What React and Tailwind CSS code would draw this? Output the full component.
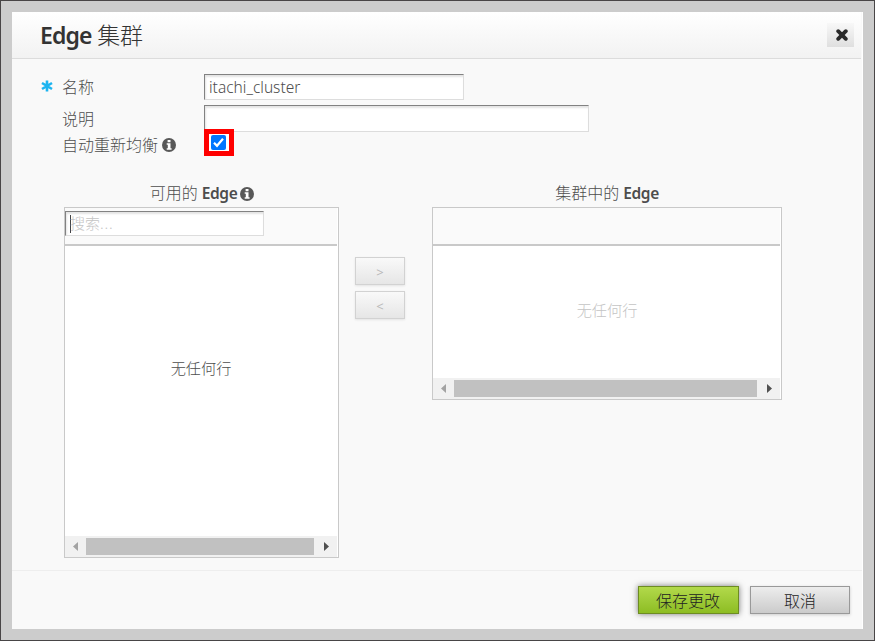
import React from "react";

function InfoIcon() {
  return (
    <svg width="14" height="14" viewBox="0 0 14 14" className="shrink-0">
      <circle cx="7" cy="7" r="7" fill="#585858" />
      <path d="M5.6 2h2.9v2.3H5.6zM4.7 5.3h3.8v4.9h1.1v1.5H4.7v-1.5h1.1V6.8H4.7z" fill="#fff" />
    </svg>
  );
}

function Scrollbar() {
  return (
    <div className="mr-px flex h-[21px] items-center bg-[#f1f1f1]">
      <div className="flex w-[21px] justify-center">
        <svg width="5" height="9" viewBox="0 0 5 9">
          <path d="M5 0v9L0 4.5z" fill="#a3a3a3" />
        </svg>
      </div>
      <div className="h-[17px] flex-1 bg-[#c1c1c1]" />
      <div className="flex w-[23px] justify-start pl-[10px]">
        <svg width="5" height="9" viewBox="0 0 5 9">
          <path d="M0 0v9l5-4.5z" fill="#505050" />
        </svg>
      </div>
    </div>
  );
}

const field =
  "border border-t-[#828282] border-l-[#828282] border-r-[#dddddd] border-b-[#dddddd] bg-white shadow-[inset_1px_2px_2px_#e4e4e4]";

const moveButton =
  "flex h-7 w-[50px] items-center justify-center border border-[#d2d2d2] bg-gradient-to-b from-[#f9f9f9] to-[#e6e6e6] pt-1 text-[13px] font-normal text-[#b9b9b9] shadow-[0_1px_2px_#e4e4e4]";

export default function App() {
  return (
    <div className="h-[641px] w-[875px] overflow-hidden border border-[#484546] bg-[#cccccc] p-[11px] font-['Noto_Sans','Noto_Sans_CJK_SC',sans-serif] text-[16px] font-light text-[#4d4d4d]">
      <div className="flex h-[617px] w-[851px] flex-col border-r border-white bg-[#f9f9f9]">
        <header className="mr-px flex h-[47px] shrink-0 items-center justify-between border-b border-[#dcdcdc] bg-gradient-to-b from-white to-[#f2f2f2] pr-[7px] pl-[28px]">
          <h1 className="text-[23px] leading-[46px] tracking-[-0.2px] whitespace-nowrap text-[#333]">
            <span className="text-[23px] font-semibold tracking-[-0.9px]">Edge</span> 集群
          </h1>
          <button className="flex h-6 w-[27px] items-center justify-center bg-gradient-to-b from-[#f8f8f8] to-[#dfdfdf] pl-[2px]">
            <svg width="12" height="12" viewBox="0 0 12 12">
              <path d="M2.2 2.2l7.6 7.6M9.8 2.2L2.2 9.8" stroke="#2a2a2a" strokeWidth="3.8" strokeLinecap="round" />
            </svg>
          </button>
        </header>

        <main className="h-[511px] shrink-0 pt-[15px]">
          <div className="flex h-[31px] items-start pl-[29px]">
            <svg width="12" height="12" viewBox="0 0 12 12" className="mt-[6px] mr-[9px]">
              <path d="M6 .5v11M1 3l10 6M11 3L1 9" stroke="#1cb4f0" strokeWidth="2.6" />
            </svg>
            <label className="w-[142px] leading-[26px]">名称</label>
            <div className={`${field} h-[26px] w-[260px] pl-1 text-[15.5px] leading-[25px]`}>itachi_cluster</div>
          </div>
          <div className="flex h-6 items-start pl-[50px]">
            <label className="w-[142px] leading-7">说明</label>
            <div className={`${field} h-[27px] w-[385px]`} />
          </div>
          <div className="relative flex h-[27px] items-start pl-[50px]">
            <div className="flex w-[142px] items-center gap-1 leading-8">
              自动重新均衡 <InfoIcon />
            </div>
            <div className="flex h-[27px] w-[30px] border-[5px] border-[#ff0000] bg-white pt-px pl-[2px]">
              <svg width="15" height="15" viewBox="0 0 15 15">
                <rect width="15" height="15" rx="2" fill="#0075ff" />
                <path d="M3 7.8l3 3 6-7" fill="none" stroke="#fff" strokeWidth="2.2" />
              </svg>
            </div>
          </div>

          <div className="flex items-start pt-[24px] pl-[52px]">
            <section className="w-[275px]">
              <h2 className="flex h-[27px] items-center justify-center gap-[3px] pl-px text-[16px] leading-[27px]">
                <span>
                  可用的 <b className="text-[15.5px] font-semibold tracking-[-0.4px]">Edge</b>
                </span>
                <InfoIcon />
              </h2>
              <div className="flex h-[351px] flex-col border border-[#c9c9c9] bg-white">
                <div className="mr-px h-[38px] shrink-0 border-b-2 border-[#c9c9c9] bg-[#fafafa] pt-[3px]">
                  <div className={`${field} flex h-[25px] w-[199px] items-center pl-1 text-[15px] text-[#c4c4c4]`}>
                    <span className="-mr-px h-[18px] w-px shrink-0 bg-[#444]" />
                    搜索<span className="tracking-[0.8px]">...</span>
                  </div>
                </div>
                <div className="flex flex-1 items-center justify-center pr-px pb-[45px] text-[15.2px]">无任何行</div>
                <Scrollbar />
              </div>
            </section>
            <div className="mt-[77px] ml-4 flex flex-col gap-1.5">
              <button className={moveButton}>&gt;</button>
              <button className={moveButton}>&lt;</button>
            </div>
            <section className="ml-[27px] w-[350px]">
              <h2 className="h-[27px] text-center text-[16px] leading-[27px]">
                集群中的 <b className="text-[15.5px] font-semibold tracking-[-0.4px]">Edge</b>
              </h2>
              <div className="flex h-[193px] flex-col border border-[#c9c9c9] bg-white">
                <div className="mr-px h-[38px] shrink-0 border-b-2 border-[#c9c9c9] bg-[#fafafa]" />
                <div className="flex flex-1 items-center justify-center pb-[3px] text-[15.2px] text-[#c4c4c4]">无任何行</div>
                <Scrollbar />
              </div>
            </section>
          </div>
        </main>

        <footer className="flex flex-1 items-start justify-end gap-[11px] border-t border-[#eeeeee] pt-[15px] pr-3 text-[#222]">
          <button className="flex h-[28px] w-[101px] items-center justify-center border border-[#6d8c22] bg-gradient-to-b from-[#b2d94a] to-[#8dbd22] pt-px pr-px shadow-[0_0_6px_#777]">
            保存更改
          </button>
          <button className="flex h-[28px] w-[100px] items-center justify-center border border-[#999] bg-gradient-to-b from-[#ededed] to-[#cbcbcb] pt-px shadow-[0_1px_3px_#ccc]">
            取消
          </button>
        </footer>
      </div>
    </div>
  );
}
